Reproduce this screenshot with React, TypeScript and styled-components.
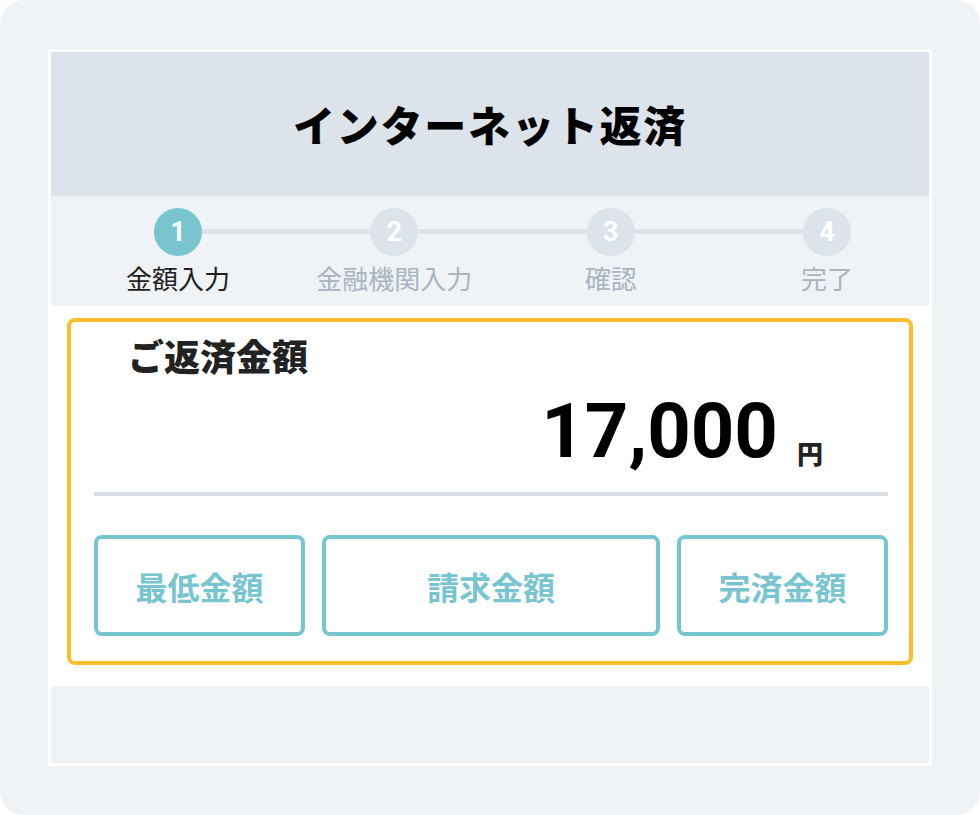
import React from 'react';
import styled, { createGlobalStyle, css } from 'styled-components';

const GlobalStyle = createGlobalStyle`
  html, body { margin: 0; padding: 0; background: #ffffff; }
  body { font-family: "Noto Sans CJK JP", "Noto Sans", sans-serif; }
  * { box-sizing: border-box; }
`;

const Page = styled.div`
  width: 980px;
  height: 815px;
  background: #eff3f6;
  border-radius: 24px;
  padding: 49px 48px 0 48px;
`;

const Frame = styled.div`
  width: 884px;
  height: 717px;
  border: 3px solid #ffffff;
  display: flex;
  flex-direction: column;
  background: #eff3f6;
`;

const Header = styled.header`
  height: 144px;
  flex: none;
  background: #dce3ea;
  display: flex;
  align-items: center;
  justify-content: center;
`;

const Title = styled.h1`
  margin: 0;
  font-size: 42px;
  font-weight: 900;
  letter-spacing: 1.8px;
  line-height: 1;
  color: #000000;
`;

const GAP = 16.33;

const Stepper = styled.ol`
  margin: 0;
  list-style: none;
  height: 110px;
  flex: none;
  padding: 12px 0 0 27px;
  display: grid;
  grid-template-columns: repeat(4, 200px);
  column-gap: ${GAP}px;
  align-items: start;
  background: #eff3f6;
`;

const Step = styled.li<{ $last?: boolean }>`
  position: relative;
  display: flex;
  flex-direction: column;
  align-items: center;
  ${(p) =>
    !p.$last &&
    css`
      &::after {
        content: '';
        position: absolute;
        top: 21px;
        left: 50%;
        width: calc(100% + ${GAP}px);
        height: 5px;
        background: #dce3ea;
        z-index: 0;
      }
    `}
`;

const Circle = styled.span<{ $active?: boolean }>`
  position: relative;
  z-index: 1;
  width: 48px;
  height: 48px;
  border-radius: 50%;
  background: ${(p) => (p.$active ? '#78c5d0' : '#dce3ea')};
  color: #ffffff;
  font-family: Roboto, "Liberation Sans", sans-serif;
  font-weight: 700;
  font-size: 27px;
  display: flex;
  align-items: center;
  justify-content: center;
`;

const StepLabel = styled.span<{ $active?: boolean }>`
  margin-top: 5px;
  font-size: 26px;
  line-height: 34px;
  color: ${(p) => (p.$active ? '#1e1e1e' : '#a8b4c0')};
  white-space: nowrap;
`;

const Content = styled.main`
  flex: none;
  height: 380px;
  background: #ffffff;
  padding: 12px 16px 21px 16px;
  display: flex;
`;

const AmountCard = styled.section`
  flex: 1;
  border: 4px solid #fcbf2c;
  border-radius: 8px;
  padding: 12px 21px 24px 23px;
  display: flex;
  flex-direction: column;
`;

const CardTitle = styled.h2`
  margin: 0 0 0 34px;
  font-size: 36px;
  line-height: 43px;
  font-weight: 900;
  color: #222222;
`;

const AmountRow = styled.div`
  margin-top: 16px;
  display: flex;
  justify-content: flex-end;
  align-items: flex-end;
  padding-right: 65px;
`;

const AmountValue = styled.span`
  font-family: Roboto, "Liberation Sans", sans-serif;
  font-weight: 700;
  font-size: 76px;
  line-height: 76px;
  color: #000000;
`;

const Yen = styled.span`
  margin-left: 19px;
  margin-bottom: 3px;
  font-size: 26px;
  line-height: 26px;
  font-weight: 900;
  color: #222222;
`;

const Divider = styled.hr`
  margin: 23px 0 0 0;
  border: none;
  height: 4px;
  background: #d9dee4;
`;

const ButtonRow = styled.div`
  margin-top: 39px;
  display: grid;
  grid-template-columns: 211px 1fr 211px;
  column-gap: 17px;
`;

const PresetButton = styled.button`
  height: 101px;
  border: 4px solid #76c6d0;
  border-radius: 8px;
  background: #ffffff;
  color: #78c5d0;
  font-family: "Noto Sans CJK JP", "Noto Sans", sans-serif;
  font-size: 32px;
  font-weight: 700;
  padding: 0;
  cursor: pointer;
`;

const Footer = styled.footer`
  flex: 1;
  background: #eff3f6;
`;

const steps = ['金額入力', '金融機関入力', '確認', '完了'];
const presets = ['最低金額', '請求金額', '完済金額'];

export default function App() {
  return (
    <>
      <GlobalStyle />
      <Page>
        <Frame>
          <Header>
            <Title>インターネット返済</Title>
          </Header>
          <Stepper>
            {steps.map((label, i) => (
              <Step key={label} $last={i === steps.length - 1}>
                <Circle $active={i === 0}>{i + 1}</Circle>
                <StepLabel $active={i === 0}>{label}</StepLabel>
              </Step>
            ))}
          </Stepper>
          <Content>
            <AmountCard>
              <CardTitle>ご返済金額</CardTitle>
              <AmountRow>
                <AmountValue>17,000</AmountValue>
                <Yen>円</Yen>
              </AmountRow>
              <Divider />
              <ButtonRow>
                {presets.map((p) => (
                  <PresetButton key={p}>{p}</PresetButton>
                ))}
              </ButtonRow>
            </AmountCard>
          </Content>
          <Footer />
        </Frame>
      </Page>
    </>
  );
}
